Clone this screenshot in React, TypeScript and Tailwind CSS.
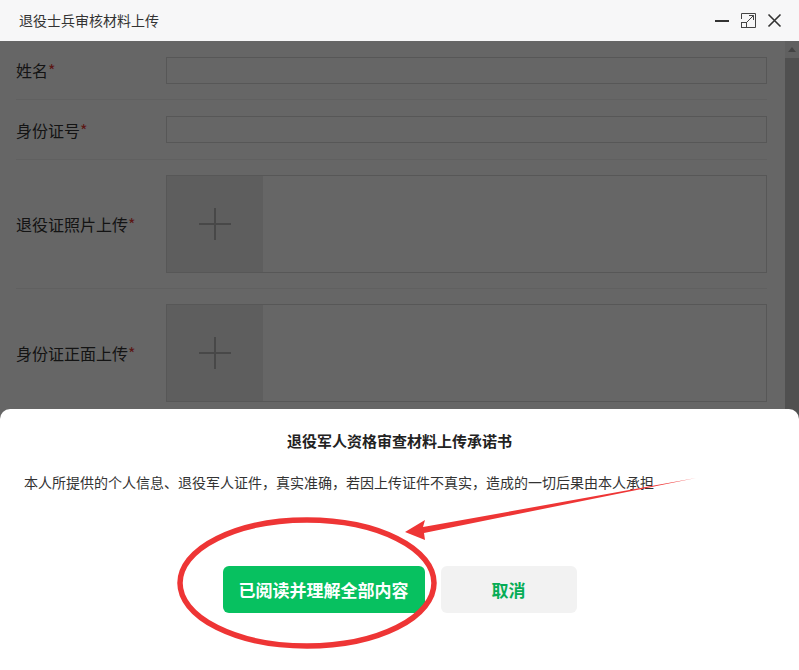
import React from 'react';

const FONT = { fontFamily: '"Noto Sans CJK SC", "Noto Sans", sans-serif' };

const Required = () => <span className="text-[#e53935]">*</span>;

const TextRow: React.FC<{ label: string; h: string }> = ({ label, h }) => (
    <div className={`ml-4 flex items-center border-b border-[#f0f0f0] ${h}`}>
        <div className="w-[150px] text-[16px] text-[#333]">
            {label}
            <Required />
        </div>
        <div className="h-[27px] flex-1 border border-[#d9d9d9] bg-white" />
    </div>
);

const UploadRow: React.FC<{ label: string }> = ({ label }) => (
    <div className="ml-4 flex h-[129px] items-center border-b border-[#f0f0f0]">
        <div className="w-[150px] text-[16px] text-[#333]">
            {label}
            <Required />
        </div>
        <div className="flex h-[98px] flex-1 border border-[#d9d9d9] bg-white">
            <div className="flex h-full w-[96px] items-center justify-center bg-[#ececec]">
                <svg width="34" height="34" viewBox="0 0 34 34">
                    <path d="M17 1v32M1 17h32" stroke="#b5b5b5" strokeWidth="2" />
                </svg>
            </div>
        </div>
    </div>
);

const TitleBar = () => (
    <div className="flex h-[41px] items-center justify-between bg-[#f7f7f8] pl-[19px] pr-[17px]">
        <span className="text-[14px] text-[#333]">退役士兵审核材料上传</span>
        <div className="flex items-center gap-[11px]">
            {/* minimize */}
            <svg width="15" height="15" viewBox="0 0 15 15">
                <path d="M0 8h14" stroke="#333" strokeWidth="2" />
            </svg>
            {/* maximize */}
            <svg width="15" height="15" viewBox="0 0 15 15">
                <path d="M0.5 6V0.5h14v14H6" fill="none" stroke="#444" strokeWidth="1" />
                <rect x="0.5" y="9.5" width="5" height="5" fill="none" stroke="#444" strokeWidth="1" />
                <path d="M6 9l6.5-6.5M8 2.5h4.5V7" fill="none" stroke="#444" strokeWidth="1" />
            </svg>
            {/* close */}
            <svg width="15" height="15" viewBox="0 0 15 15">
                <path d="M1.5 1.5l12 12M13.5 1.5l-12 12" stroke="#333" strokeWidth="1.6" />
            </svg>
        </div>
    </div>
);

const Scrollbar = () => (
    <div className="flex w-[14px] flex-col bg-[#c8c8c8]">
        <div className="flex h-[17px] items-center justify-center bg-[#f1f1f1]">
            <svg width="8" height="5" viewBox="0 0 8 5">
                <path d="M0 5L4 0l4 5z" fill="#a8a8a8" />
            </svg>
        </div>
    </div>
);

const PledgeSheet = () => (
    <div className="absolute inset-x-0 bottom-0 h-[261px] rounded-t-[10px] bg-white pt-[22px]">
        <h2 className="text-center text-[15px] font-bold leading-[20px] text-[#222]">
            退役军人资格审查材料上传承诺书
        </h2>
        <p className="mt-[21px] px-6 text-[14px] leading-[20px] text-[#333]">
            本人所提供的个人信息、退役军人证件，真实准确，若因上传证件不真实，造成的一切后果由本人承担
        </p>
        <div className="mt-[74px] flex justify-center gap-4">
            <button className="h-[47px] w-[202px] rounded-md bg-[#07c160] text-[17px] font-bold text-white">
                已阅读并理解全部内容
            </button>
            <button className="h-[47px] w-[136px] rounded-md bg-[#f2f2f2] text-[17px] font-bold text-[#06ad56]">
                取消
            </button>
        </div>
    </div>
);

// hand-drawn red markup: ring round the confirm button plus a pointer arrow
const Markup = () => (
    <svg className="pointer-events-none absolute left-0 top-0" width="799" height="670" viewBox="0 0 799 670">
        <ellipse cx="307" cy="583" rx="127" ry="63" fill="none" stroke="#ee3535" strokeWidth="5.5" />
        <polygon
            points="405,532 425,520 423,527 696,478 424,533 425,540"
            fill="#ee3535"
        />
    </svg>
);

export default function App() {
    return (
        <div className="relative h-[670px] w-[799px] overflow-hidden bg-white" style={FONT}>
            <TitleBar />
            <div className="relative flex h-[629px] overflow-hidden">
                <div className="flex-1 pr-[18px]">
                    <TextRow label="姓名" h="h-[59px]" />
                    <TextRow label="身份证号" h="h-[60px]" />
                    <UploadRow label="退役证照片上传" />
                    <UploadRow label="身份证正面上传" />
                </div>
                <Scrollbar />
                <div className="absolute inset-0 bg-black/60" />
                <PledgeSheet />
            </div>
            <Markup />
        </div>
    );
}
